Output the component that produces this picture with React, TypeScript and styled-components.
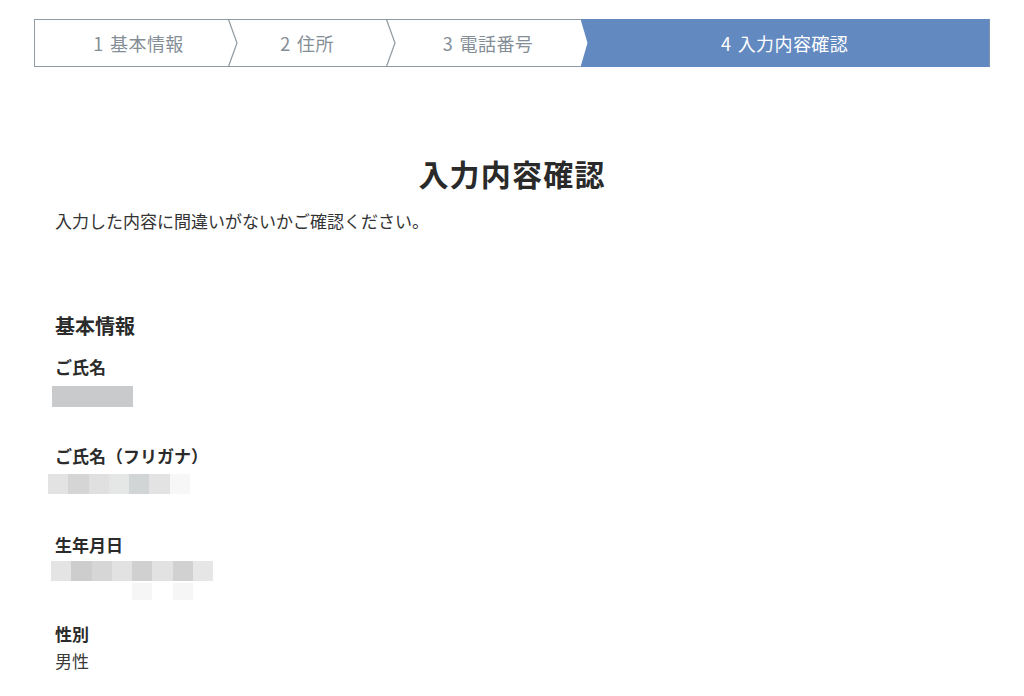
import React from "react";
import styled, { createGlobalStyle } from "styled-components";

const GlobalStyle = createGlobalStyle`
  html, body {
    margin: 0;
    padding: 0;
    background: #ffffff;
  }
  body {
    font-family: "Noto Sans CJK JP", "Noto Sans", sans-serif;
    color: #333333;
  }
`;

const Page = styled.div`
  width: 1024px;
  padding: 19px 34px 0;
  box-sizing: border-box;
`;

const StepBar = styled.div`
  display: flex;
  height: 48px;
  width: 956px;
`;

const Step = styled.div<{ $w: number; $pl?: number; $pr?: number; $first?: boolean; $active?: boolean }>`
  flex: 0 0 ${(p) => p.$w}px;
  box-sizing: border-box;
  height: 48px;
  display: flex;
  align-items: center;
  justify-content: center;
  padding-left: ${(p) => p.$pl ?? 0}px;
  padding-right: ${(p) => p.$pr ?? 0}px;
  font-size: 18px;
  letter-spacing: 0.4px;
  word-spacing: 2px;
  white-space: nowrap;
  color: ${(p) => (p.$active ? "#ffffff" : "#848e97")};
  background: ${(p) => (p.$active ? "#6389c1" : "#ffffff")};
  border-top: 1px solid ${(p) => (p.$active ? "#6389c1" : "#8f9aa2")};
  border-bottom: 1px solid ${(p) => (p.$active ? "#6389c1" : "#8f9aa2")};
  border-left: ${(p) => (p.$first ? "1px solid #8f9aa2" : "none")};
  border-right: ${(p) => (p.$active ? "1px solid #7f93ad" : "none")};
`;

const SepSvg = styled.svg<{ $w: number }>`
  flex: 0 0 ${(p) => p.$w}px;
  display: block;
`;

const Separator = () => (
  <SepSvg $w={10} width={10} height={48} viewBox="0 0 10 48">
    <rect x="0" y="0" width="10" height="48" fill="#ffffff" />
    <line x1="0" y1="0.5" x2="10" y2="0.5" stroke="#8f9aa2" strokeWidth="1" />
    <line x1="0" y1="47.5" x2="10" y2="47.5" stroke="#8f9aa2" strokeWidth="1" />
    <polyline points="0.5,0.5 9,24 0.5,47.5" fill="none" stroke="#8f9aa2" strokeWidth="1.2" />
  </SepSvg>
);

const ActiveSeparator = () => (
  <SepSvg $w={8} width={8} height={48} viewBox="0 0 8 48">
    <rect x="0" y="0" width="8" height="48" fill="#6389c1" />
    <polygon points="0,0 0.5,0 7.5,24 0.5,48 0,48" fill="#ffffff" />
    <line x1="0" y1="0.5" x2="0.8" y2="0.5" stroke="#8f9aa2" strokeWidth="1" />
    <line x1="0" y1="47.5" x2="0.8" y2="47.5" stroke="#8f9aa2" strokeWidth="1" />
  </SepSvg>
);

const Content = styled.div`
  padding-left: 21px;
`;

const Title = styled.h1`
  margin: 85px 0 0;
  text-align: center;
  font-size: 30px;
  line-height: 42px;
  letter-spacing: 1.2px;
  font-weight: 700;
  color: #2a2a2a;
`;

const Lead = styled.p`
  margin: 15px 0 0;
  font-size: 17px;
  line-height: 24px;
  color: #333333;
`;

const SectionHeading = styled.h2`
  margin: 79px 0 0;
  font-size: 20px;
  line-height: 28px;
  font-weight: 700;
  color: #2b2b2b;
`;

const FieldList = styled.div`
  margin-top: 15px;
  display: flex;
  flex-direction: column;
`;

const Field = styled.div`
  min-height: 89px;
  display: flex;
  flex-direction: column;
  align-items: flex-start;
`;

const Label = styled.div`
  font-size: 17px;
  line-height: 24px;
  font-weight: 700;
  color: #2b2b2b;
`;

const ValueText = styled.div<{ $mt: number }>`
  margin-top: ${(p) => p.$mt}px;
  font-size: 17px;
  line-height: 24px;
  color: #3a3a3a;
`;

const MaskBox = styled.div<{ $mt: number; $ml: number }>`
  margin-top: ${(p) => p.$mt}px;
  margin-left: ${(p) => p.$ml}px;
  width: 81px;
  height: 21px;
  background: #c9cacb;
`;

const PixelGrid = styled.div<{ $mt: number; $ml: number }>`
  margin-top: ${(p) => p.$mt}px;
  margin-left: ${(p) => p.$ml}px;
  display: flex;
  flex-direction: column;
  gap: 2px;
`;

const PixelRow = styled.div<{ $h: number }>`
  display: flex;
  height: ${(p) => p.$h}px;
`;

const Pixel = styled.div<{ $c: string }>`
  width: 20.3px;
  height: 100%;
  background: ${(p) => p.$c};
`;

const Pixelated = ({ rows, mt, ml }: { rows: { h: number; cells: string[] }[]; mt: number; ml: number }) => (
  <PixelGrid $mt={mt} $ml={ml}>
    {rows.map((r, i) => (
      <PixelRow key={i} $h={r.h}>
        {r.cells.map((c, j) => (
          <Pixel key={j} $c={c} />
        ))}
      </PixelRow>
    ))}
  </PixelGrid>
);

const furigana = [
  { h: 20, cells: ["#e3e3e3", "#d5d5d5", "#e0e0e0", "#e5e7e7", "#d2d5d5", "#e3e3e3", "#f7f7f7"] },
];

const birthday = [
  { h: 20, cells: ["#e4e4e4", "#cdcdcd", "#d6d6d6", "#e2e2e2", "#d0d0d0", "#e2e2e2", "#d1d1d1", "#e6e6e6"] },
  { h: 17, cells: ["transparent", "transparent", "transparent", "transparent", "#f6f6f6", "transparent", "#f6f6f6", "transparent"] },
];

export default function App() {
  return (
    <>
      <GlobalStyle />
      <Page>
        <StepBar>
          <Step $w={194} $pl={14} $first>1 基本情報</Step>
          <Separator />
          <Step $w={148} $pr={10}>2 住所</Step>
          <Separator />
          <Step $w={184}>3 電話番号</Step>
          <ActiveSeparator />
          <Step $w={402} $pr={8} $active>4 入力内容確認</Step>
        </StepBar>
        <Title>入力内容確認</Title>
        <Content>
          <Lead>入力した内容に間違いがないかご確認ください。</Lead>
          <SectionHeading>基本情報</SectionHeading>
          <FieldList>
            <Field>
              <Label>ご氏名</Label>
              <MaskBox $mt={7} $ml={-3} />
            </Field>
            <Field>
              <Label>ご氏名（フリガナ）</Label>
              <Pixelated rows={furigana} mt={6} ml={-7} />
            </Field>
            <Field>
              <Label>生年月日</Label>
              <Pixelated rows={birthday} mt={4} ml={-4} />
            </Field>
            <Field>
              <Label>性別</Label>
              <ValueText $mt={3}>男性</ValueText>
            </Field>
          </FieldList>
        </Content>
      </Page>
    </>
  );
}
